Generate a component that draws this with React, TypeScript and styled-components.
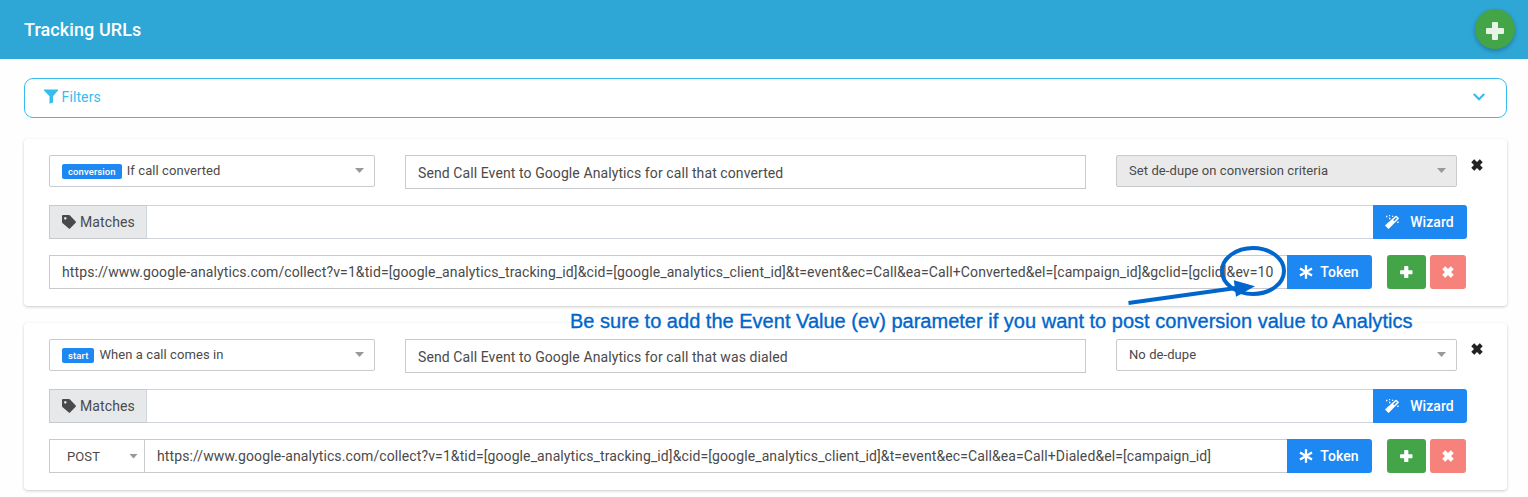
import React from "react";
import styled, { createGlobalStyle, css } from "styled-components";

const GlobalStyle = createGlobalStyle`
  * { box-sizing: border-box; }
  body { margin: 0; background: #fff; overflow: hidden; font-family: Roboto, "Liberation Sans", sans-serif; color: #4a4a4a; }
`;

const Page = styled.div`position: relative; width: 1528px; height: 497px; overflow: hidden; background: #fefefe;`;

const Header = styled.header`
  height: 59px; padding: 0 13px 1px 24px; background: #2ea6d6;
  display: flex; align-items: center; justify-content: space-between;
`;
const Title = styled.h1`margin: 0; padding-top: 1px; font-size: 18px; line-height: 24px; font-weight: 500; color: #fff; letter-spacing: 0.08px;`;
const RoundButton = styled.button`
  width: 40px; height: 40px; padding: 3px 0 0; border: 0; border-radius: 50%; background: #43a547; color: #e8f3e8;
  display: flex; align-items: center; justify-content: center;
  box-shadow: 0 2px 4px rgba(0, 0, 0, 0.26);
`;

const Main = styled.main`padding: 19px 21px 0 24px;`;
const Filters = styled.div`
  height: 40px; border: 1px solid #36bdee; border-radius: 9px; padding: 0 21px 3px 19px; background: #fff;
  color: #36bdee; font-size: 14px; letter-spacing: 0.1px;
  display: flex; align-items: center; justify-content: space-between; margin-bottom: 21px;
`;
const FiltersLabel = styled.span`display: flex; align-items: center; gap: 3.6px;`;

const Card = styled.section`
  height: 167px; margin-bottom: 17px; padding: 16px 0 0 25px; background: #fff; border-radius: 4px;
  box-shadow: 0 1px 3px rgba(0, 0, 0, 0.2);
`;
const TopRow = styled.div`display: flex; align-items: flex-start; height: 50px;`;
const Select = styled.div<{ $width: number; $disabled?: boolean }>`
  width: ${(p) => p.$width}px; height: 32px; padding: 0 10px 1px 12px; border: 1px solid #c8cacd; border-radius: 2px;
  background: ${(p) => (p.$disabled ? "#eaeaea" : "#fff")};
  display: flex; align-items: center; justify-content: space-between; font-size: 13px; letter-spacing: 0.08px;
`;
const SelectLabel = styled.span`display: flex; align-items: center; gap: 5px;`;
const Badge = styled.span`
  height: 15px; margin-top: 2px; padding: 0 6px; border-radius: 2px; background: #1e88f2; color: #fff;
  font-size: 9.5px; line-height: 15px; font-weight: 500; letter-spacing: 0.1px;
`;
const Caret = styled.i`
  width: 9px; height: 5px; background: #999; clip-path: polygon(0 0, 100% 0, 50% 100%);
`;
const field = css`
  height: 34px; padding: 0 12px; border: 1px solid #c8cacd; background: #fff;
  font-size: 14px; line-height: 32px; letter-spacing: 0.107px; white-space: nowrap; overflow: hidden;
`;
const NameInput = styled.div`${field} width: 681px; margin: 0 30px; line-height: 35px; letter-spacing: 0.09px;`;
const CloseButton = styled.button`
  margin: 4px 0 0 14px; padding: 0; border: 0; background: none; color: #222; display: flex;
`;
const Row = styled.div`display: flex; height: 34px; margin-bottom: 16px;`;
const Addon = styled.div`
  width: 98px; border: 1px solid #c8cacd; border-right-color: #d0d4dd; background: #e7e8ea; padding-left: 12px;
  display: flex; align-items: center; gap: 4px; font-size: 14px; letter-spacing: 0.12px;
`;
const MatchInput = styled.div`width: 1226px; border: solid #d0d4dd; border-width: 1px 0; background: #fff;`;
const Method = styled.div`
  width: 95px; border: 1px solid #c8cacd; border-right: 0; background: #fff; padding: 0 6px 0 17px;
  display: flex; align-items: center; justify-content: space-between; font-size: 13px; letter-spacing: 0.1px;
`;
const UrlInput = styled.div<{ $width: number }>`${field} width: ${(p) => p.$width}px; border-right: 0;`;
const ActionButton = styled.button<{ $width: number; $gap?: number }>`
  width: ${(p) => p.$width}px; height: 34px; padding: 0 1px 0 0; border: 0; border-radius: 0 3px 3px 0; background: #1e88f2; color: #fff;
  display: flex; align-items: center; justify-content: center; gap: ${(p) => p.$gap ?? 7}px;
  font: 500 14px Roboto, sans-serif; letter-spacing: 0.08px;
`;
const SquareButton = styled.button<{ $kind: "add" | "remove" }>`
  width: ${(p) => (p.$kind === "add" ? 39 : 36)}px; height: 34px; padding: ${(p) => (p.$kind === "add" ? "0" : "0 1px 0 0")}; border: 0; border-radius: 3px; color: #fff;
  margin-left: ${(p) => (p.$kind === "add" ? 15 : 4)}px; background: ${(p) => (p.$kind === "add" ? "#43a547" : "#f7827b")};
  display: flex; align-items: center; justify-content: center;
`;
const Note = styled.p`
  position: absolute; left: 570px; top: 309px; margin: 0; white-space: nowrap; color: #0066cc;
  font: 20px/24px "Liberation Sans", Arial, sans-serif; letter-spacing: 0.013px; -webkit-text-stroke: 0.35px #0066cc;
`;
const Callout = styled.svg`position: absolute; left: 1120px; top: 240px;`;

const PlusIcon = ({ size = 12.5 }: { size?: number }) => (
  <svg width={size} height={size} viewBox="0 0 12 12" fill="currentColor">
    <path d="M4.700 0h2.600q.7 0 .7.700V4h3.300q.7 0 .7.700v2.600q0 .7-.7.700H8v3.300q0 .7-.7.700H4.700q-.7 0-.7-.7V8H.7Q0 8 0 7.300V4.700Q0 4 .7 4H4V.7Q4 0 4.700 0z" />
  </svg>
);
const CrossIcon = () => (
  <svg width="12" height="12" viewBox="0 0 12 12" fill="currentColor">
    <path d="M2.900.5Q3.200.2 3.500.5L6 3 8.500.5q.3-.3.600 0l2.400 2.400q.3.300 0 .6L9 6l2.500 2.500q.3.300 0 .6l-2.400 2.400q-.3.300-.6 0L6 9l-2.500 2.500q-.3.300-.6 0L.5 9.100Q.2 8.800.5 8.500L3 6 .5 3.500Q.2 3.200.5 2.900z" />
  </svg>
);
const FunnelIcon = () => (
  <svg width="14" height="15" viewBox="0 0 14 15" fill="currentColor">
    <path d="M0 .5h14v1L9 7.300v6.200L5.500 14.800V7.300L0 1.500z" />
  </svg>
);
const ChevronIcon = () => (
  <svg width="12" height="8" viewBox="0 0 12 8" fill="none" stroke="currentColor" strokeWidth="2.200"><path d="M.8 1 6 6.200 11.200 1" /></svg>
);
const TagIcon = () => (
  <svg width="14" height="14" viewBox="0 0 14 14" fill="currentColor">
    <path fillRule="evenodd" d="M1 0h6q.6 0 1 .4L13.700 6.500q.6.600 0 1.200L8 13.600q-.6.600-1.200 0L.4 7.900Q0 7.500 0 6.900V1q0-1 1-1zm2.300 2a1.300 1.300 0 1 0 .01 0z" />
  </svg>
);
const WandIcon = () => (
  <svg width="14" height="14" viewBox="0 0 14 14" fill="currentColor">
    <path fillRule="evenodd" d="M10.400 1q.7-.7 1.400 0l1.700 1.700q.7.700 0 1.400L4.100 13.500q-.6.600-1.200 0L.5 11.100q-.6-.6 0-1.200zM11.100 2.300 8.200 5.200l1 1L12.100 3.300z" />
    <path d="M1 .8h1.400v1.400H1zM4 0h1.200v1.200H4zM4 2.800h1.400v1.400H4zM7 .7h1.300V2H7zM12.200 6.500h1.400v1.400h-1.400z" />
  </svg>
);
const AsteriskIcon = () => (
  <svg width="14" height="14" viewBox="0 0 14 14" stroke="currentColor" strokeWidth="2.300">
    <path d="M7 .3v13.400M1 3.500l12 7M13 3.500l-12 7" />
  </svg>
);

interface TrackingProps {
  event: string; label: string; name: string; dedupe: string; dedupeDisabled?: boolean; method?: string; url: string;
}
function TrackingCard({ event, label, name, dedupe, dedupeDisabled, method, url }: TrackingProps) {
  return (
    <Card>
      <TopRow>
        <Select $width={326}><SelectLabel><Badge>{event}</Badge>{label}</SelectLabel><Caret /></Select>
        <NameInput>{name}</NameInput>
        <Select $width={341} $disabled={dedupeDisabled}>{dedupe}<Caret /></Select>
        <CloseButton aria-label="Remove tracking URL"><CrossIcon /></CloseButton>
      </TopRow>
      <Row>
        <Addon><TagIcon />Matches</Addon>
        <MatchInput />
        <ActionButton $width={94} $gap={11}><WandIcon />Wizard</ActionButton>
      </Row>
      <Row>
        {method && <Method>{method}<Caret /></Method>}
        <UrlInput $width={method ? 1143 : 1238}>{url}</UrlInput>
        <ActionButton $width={85}><AsteriskIcon />Token</ActionButton>
        <SquareButton $kind="add" aria-label="Add URL"><PlusIcon /></SquareButton>
        <SquareButton $kind="remove" aria-label="Remove URL"><CrossIcon /></SquareButton>
      </Row>
    </Card>
  );
}

export default function App() {
  return (
    <Page>
      <GlobalStyle />
      <Header>
        <Title>Tracking URLs</Title>
        <RoundButton aria-label="Add tracking URL"><PlusIcon size={18} /></RoundButton>
      </Header>
      <Main>
        <Filters><FiltersLabel><FunnelIcon />Filters</FiltersLabel><ChevronIcon /></Filters>
        <TrackingCard
          event="conversion" label="If call converted"
          name="Send Call Event to Google Analytics for call that converted"
          dedupe="Set de-dupe on conversion criteria" dedupeDisabled
          url="https://www.google-analytics.com/collect?v=1&tid=[google_analytics_tracking_id]&cid=[google_analytics_client_id]&t=event&ec=Call&ea=Call+Converted&el=[campaign_id]&gclid=[gclid]&ev=10"
        />
        <TrackingCard
          event="start" label="When a call comes in"
          name="Send Call Event to Google Analytics for call that was dialed"
          dedupe="No de-dupe" method="POST"
          url="https://www.google-analytics.com/collect?v=1&tid=[google_analytics_tracking_id]&cid=[google_analytics_client_id]&t=event&ec=Call&ea=Call+Dialed&el=[campaign_id]"
        />
      </Main>
      <Callout width="180" height="70" viewBox="0 0 180 70">
        <ellipse cx="133" cy="31" rx="31" ry="23" fill="none" stroke="#0066cc" strokeWidth="4" />
        <path d="M8.500 63 116 48" stroke="#0066cc" strokeWidth="4" />
        <path d="M113.800 40.300 135 46.300 116 56.700z" fill="#0066cc" />
      </Callout>
      <Note>Be sure to add the Event Value (ev) parameter if you want to post conversion value to Analytics</Note>
    </Page>
  );
}
